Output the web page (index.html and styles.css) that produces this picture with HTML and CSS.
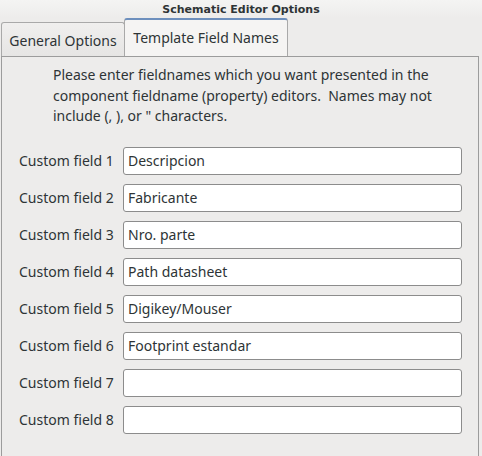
FILE: index.html
```html
<!DOCTYPE html>
<html>
<head>
<meta charset="utf-8">
<link rel="stylesheet" href="styles.css">
</head>
<body>
<div class="window">
  <div class="titlebar">Schematic Editor Options</div>
  <div class="tabs">
    <div class="tab">General Options</div>
    <div class="tab active">Template Field Names</div>
  </div>
  <div class="panel">
    <p class="intro">Please enter fieldnames which you want presented in the component fieldname (property) editors.&nbsp; Names may not include (, ), or " characters.</p>
    <div class="fields">
      <label class="row"><span class="lbl">Custom field 1</span><input class="entry" value="Descripcion"></label>
      <label class="row"><span class="lbl">Custom field 2</span><input class="entry" value="Fabricante"></label>
      <label class="row"><span class="lbl">Custom field 3</span><input class="entry" value="Nro. parte"></label>
      <label class="row"><span class="lbl">Custom field 4</span><input class="entry" value="Path datasheet"></label>
      <label class="row"><span class="lbl">Custom field 5</span><input class="entry" value="Digikey/Mouser"></label>
      <label class="row"><span class="lbl">Custom field 6</span><input class="entry" value="Footprint estandar"></label>
      <label class="row"><span class="lbl">Custom field 7</span><input class="entry" value=""></label>
      <label class="row"><span class="lbl">Custom field 8</span><input class="entry" value=""></label>
    </div>
  </div>
</div>
</body>
</html>
```
FILE: styles.css
```css
html, body {
  margin: 0;
  padding: 0;
  height: 100%;
  overflow: hidden;
}
body {
  background: #edeceb;
  font-family: "Noto Sans", "DejaVu Sans", sans-serif;
  font-size: 14px;
  color: #2e3436;
}
.window {
  display: flex;
  flex-direction: column;
  height: 100%;
}
.titlebar {
  height: 18px;
  line-height: 20px;
  text-align: center;
  font-family: "DejaVu Sans", sans-serif;
  font-weight: bold;
  font-size: 11px;
  color: #2e3436;
  background: linear-gradient(#f4f4f3, #edeceb);
}
.tabs {
  display: flex;
  align-items: flex-end;
  height: 38px;
  padding-left: 1px;
}
.tab {
  box-sizing: border-box;
  height: 34px;
  width: 124px;
  border: 1px solid #a9a9a9;
  border-bottom: none;
  border-radius: 3px 3px 0 0;
  background: linear-gradient(#f0efee, #e6e5e4);
  text-align: center;
  line-height: 36px;
  white-space: nowrap;
}
.tab.active {
  height: 38px;
  width: 164px;
  margin-left: -1px;
  border-top: 2px solid #6d8fbd;
  background: #f5f4f3;
  line-height: 35px;
}
.panel {
  flex: 1;
  margin: 0 3px 0 1px;
  border: 1px solid #9c9c9c;
  border-bottom: none;
  background: #edeceb;
  padding: 0 16px 0 17px;
}
.intro {
  margin: 8px 0 0 34px;
  width: 390px;
  line-height: 20.5px;
}
.fields {
  display: flex;
  flex-direction: column;
  gap: 9px;
  margin-top: 20px;
}
.row {
  display: flex;
  align-items: center;
  gap: 9px;
}
.lbl {
  width: 95px;
  white-space: nowrap;
}
.entry {
  box-sizing: border-box;
  flex: 1;
  height: 28px;
  margin: 0;
  border: 1px solid #8c8c8c;
  border-radius: 3px;
  background: #ffffff;
  padding: 0 4px;
  font: inherit;
  color: #2e3436;
  outline: none;
}
```
